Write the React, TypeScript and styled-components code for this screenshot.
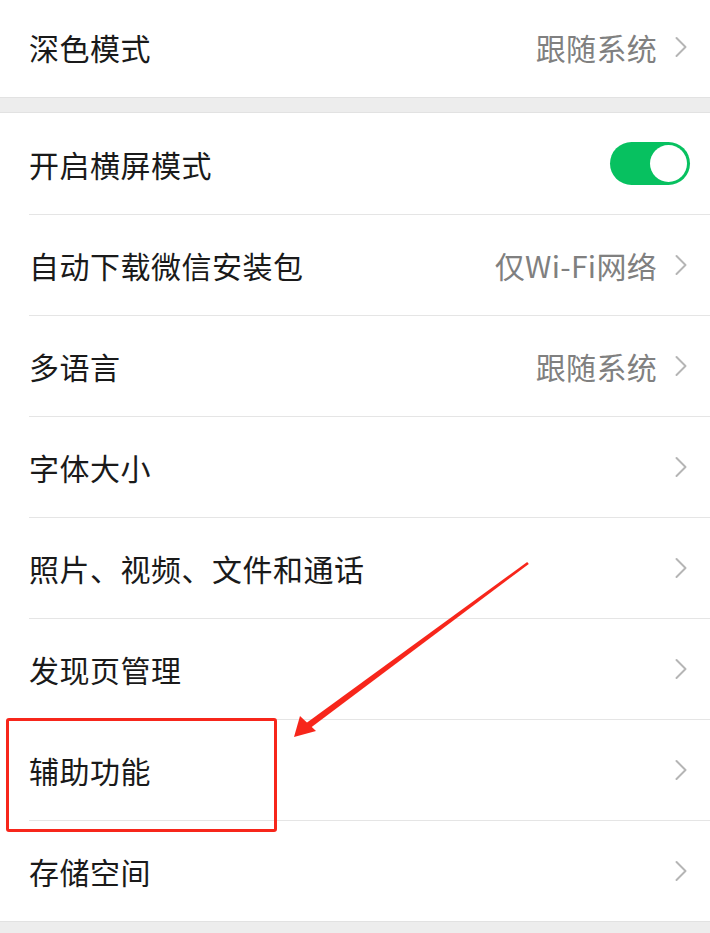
import styled, { createGlobalStyle } from 'styled-components';

interface SettingItem {
    label: string
    value?: string
    toggle?: boolean
    chevron?: boolean
}

const topItems: SettingItem[] = [
    { label: '深色模式', value: '跟随系统', chevron: true },
]

const mainItems: SettingItem[] = [
    { label: '开启横屏模式', toggle: true },
    { label: '自动下载微信安装包', value: '仅Wi-Fi网络', chevron: true },
    { label: '多语言', value: '跟随系统', chevron: true },
    { label: '字体大小', chevron: true },
    { label: '照片、视频、文件和通话', chevron: true },
    { label: '发现页管理', chevron: true },
    { label: '辅助功能', chevron: true },
    { label: '存储空间', chevron: true },
]

const Chevron = () => (
    <ChevronIcon width="14" height="22" viewBox="0 0 14 22">
        <path d="M2.5 2 L11.5 11 L2.5 20" fill="none" stroke="#b5b5b5" strokeWidth="2" strokeLinecap="round" strokeLinejoin="round" />
    </ChevronIcon>
)

const Row = ({ item, first }: { item: SettingItem, first: boolean }) => (
    <RowWrap first={first}>
        <Label>{item.label}</Label>
        <Right>
            {item.value && <Value>{item.value}</Value>}
            {item.chevron && <Chevron />}
            {item.toggle && <Toggle><Knob /></Toggle>}
        </Right>
    </RowWrap>
)

const App = () => {
    return (
        <Page>
            <GlobalStyle />
            <TopSection>
                {topItems.map((item, index) => <Row key={index} item={item} first={index === 0} />)}
            </TopSection>
            <Gap />
            <Section>
                {mainItems.map((item, index) => <Row key={index} item={item} first={index === 0} />)}
            </Section>
            <Bottom />

            {/* annotation overlays */}
            <HighlightBox />
            <ArrowLayer width="710" height="933" viewBox="0 0 710 933">
                <polygon points="527.2,562 528.8,564 309,729 305,724" fill="#f7261b" />
                <polygon points="294,737 300,716 316,731" fill="#f7261b" />
            </ArrowLayer>
        </Page>
    )
}

const GlobalStyle = createGlobalStyle`
    html, body {
        margin: 0;
        padding: 0;
        background: #ededed;
    }
    body {
        font-family: "Noto Sans CJK SC", "Noto Sans", sans-serif;
    }
`

const Page = styled.div`
    position: relative;
    width: 710px;
    height: 933px;
    overflow: hidden;
    background: #ededed;
`

const TopSection = styled.div`
    background: white;
    margin-top: -4px;
    border-bottom: 1px solid #e2e2e2;
`

const Gap = styled.div`
    height: 14px;
`

const Section = styled.div`
    background: white;
    border-top: 1px solid #e2e2e2;
`

const Bottom = styled.div`
    height: 12px;
    border-top: 1px solid #e2e2e2;
`

interface RowWrapProps {
    first: boolean
}

const RowWrap = styled.div<RowWrapProps>`
    position: relative;
    display: flex;
    align-items: center;
    justify-content: space-between;
    box-sizing: border-box;
    height: 101px;
    padding: 0 20px 0 29px;

    ${({ first }) => !first && `
        &:before {
            content: '';
            position: absolute;
            top: 0;
            left: 29px;
            right: 0;
            height: 1px;
            background: #e5e5e5;
        }
    `}
`

const Label = styled.div`
    font-size: 30px;
    color: #1a1a1a;
    letter-spacing: 0.5px;
`

const Right = styled.div`
    display: flex;
    align-items: center;
`

const Value = styled.div`
    font-size: 30px;
    color: #808080;
    letter-spacing: 0.3px;
    margin-right: 17px;
`

const ChevronIcon = styled.svg`
    display: block;
    margin-right: 2px;
`

const Toggle = styled.div`
    width: 80px;
    height: 43px;
    border-radius: 22px;
    background: #07c160;
    display: flex;
    align-items: center;
    justify-content: flex-end;
    padding-right: 3px;
    box-sizing: border-box;
`

const Knob = styled.div`
    width: 37px;
    height: 37px;
    border-radius: 50%;
    background: white;
`

const HighlightBox = styled.div`
    position: absolute;
    left: 6px;
    top: 718px;
    width: 265px;
    height: 108px;
    border: 3px solid #f7261b;
    border-radius: 3px;
`

const ArrowLayer = styled.svg`
    position: absolute;
    left: 0;
    top: 0;
    pointer-events: none;
`

export default App
